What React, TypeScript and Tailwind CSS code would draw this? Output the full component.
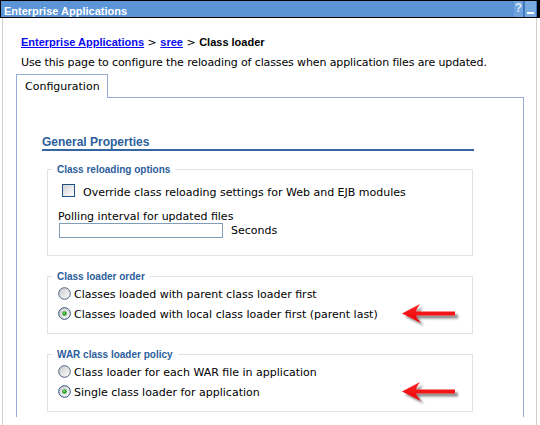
import React from "react";

const Radio = ({ checked }: { checked?: boolean }) => (
  <svg width="13" height="13" viewBox="0 0 13 13" className="shrink-0">
    <defs>
      <linearGradient id={checked ? "rg1" : "rg0"} x1="0" y1="0" x2="1" y2="1">
        <stop offset="0" stopColor="#c9c9c9" />
        <stop offset="1" stopColor="#ffffff" />
      </linearGradient>
    </defs>
    <circle cx="6.5" cy="6.5" r="5.8" fill={`url(#${checked ? "rg1" : "rg0"})`} stroke={checked ? "#2a4d78" : "#4d6280"} strokeWidth="1" />
    {checked && (
      <>
        <circle cx="6.5" cy="6.5" r="2.3" fill="#24a024" />
        <circle cx="6.1" cy="6.1" r="0.9" fill="#8fe08f" />
      </>
    )}
  </svg>
);

const Arrow = () => (
  <svg width="64" height="28" viewBox="0 0 64 28" className="absolute left-[342px] top-[-6px]">
    <defs>
      <filter id="sh" x="-20%" y="-30%" width="150%" height="180%">
        <feDropShadow dx="3" dy="3" stdDeviation="1.3" floodColor="#000" floodOpacity="0.45" />
      </filter>
      <linearGradient id="ag" x1="0" y1="0" x2="0" y2="1">
        <stop offset="0" stopColor="#ff2a2a" />
        <stop offset="1" stopColor="#e60000" />
      </linearGradient>
    </defs>
    <path
      d="M2 12.5 L20 3 Q17 7 16 10.5 L55 10.5 L55 14.5 L16 14.5 Q17 18 21 22 Z"
      fill="url(#ag)"
      filter="url(#sh)"
    />
  </svg>
);

export default function App() {
  const reg = "font-['DejaVu_Sans',sans-serif] text-[11px]";
  const bold = "font-['Liberation_Sans',Arial,sans-serif] font-bold";
  return (
    <div className={`w-[540px] h-[425px] bg-white overflow-hidden text-black ${reg}`}>
      {/* title bar */}
      <div className="h-[18px] w-[540px] border border-black border-r-[3px] bg-[#5b95d7] flex items-start">
        <div className={`${bold} text-white text-[11px] leading-[12px] pt-[4px] pl-[3px]`}>Enterprise Applications</div>
        <div className="ml-auto flex h-full">
          <div className={`${bold} w-[9px] h-full bg-[#6fa3dd] text-[#dce9f7] text-[12px] leading-[14px] text-center`}>?</div>
          <div className="w-[2px] h-full bg-[#3f78bd]" />
          <div className="w-[11px] h-full bg-[#79abe0] flex items-end justify-center pb-[3px]">
            <div className="w-[7px] h-[2px] bg-white" />
          </div>
          <div className="w-[1px] h-full bg-[#3f78bd]" />
        </div>
      </div>

      {/* content */}
      <div className="ml-[2px] w-[535px] h-[407px] border-x border-[#d0d0d0] pl-[13px] pt-[17px]">
        <div className="pl-[5px]">
          <div className="leading-[14px]">
            <a className={`${bold} text-[11px] text-[#0a0af0] underline`}>Enterprise Applications</a>
            <span> &gt; </span>
            <a className={`${bold} text-[11px] text-[#0a0af0] underline`}>sree</a>
            <span> &gt; </span>
            <span className={`${bold} text-[11px]`}>Class loader</span>
          </div>
          <div className="leading-[14px] mt-[6px] tracking-[-0.12px]">
            Use this page to configure the reloading of classes when application files are updated.
          </div>
        </div>

        {/* tab */}
        <div className="mt-[4px] w-[92px] border-t border-x border-[#95acd9] bg-white pl-[8px] pt-[5px] pb-[4px] leading-[14px] relative z-10 -mb-px">
          Configuration
        </div>

        {/* panel */}
        <div className="w-[508px] h-[320px] border-t border-x border-[#95acd9] pl-[25px] pt-[38px]">
          <div className={`${bold} text-[12px] leading-[13px] text-[#2d5e9c] w-[432px] border-b-2 border-[#3566a3]`}>
            General Properties
          </div>

          {/* fieldset 1 */}
          <fieldset className="ml-[5px] mt-[12px] w-[426px] border border-[#e2e2e2] px-[4px] pb-[17px]">
            <legend className={`${bold} text-[10px] leading-[13px] text-[#2d5e9c] px-[5px]`}>Class reloading options</legend>
            <div className="flex items-center mt-[8px] ml-[10px] h-[13px]">
              <div className="w-[13px] h-[13px] border border-[#1f4f80] bg-gradient-to-br from-[#d2d2d2] to-white shrink-0" />
              <span className="ml-[8px] leading-[13px] mt-[3px]">Override class reloading settings for Web and EJB modules</span>
            </div>
            <div className="ml-[6px] mt-[13px] leading-[13px]">Polling interval for updated files</div>
            <div className="flex items-center ml-[7px]">
              <div className="w-[164px] h-[15px] border border-[#7f9db9] bg-white" />
              <span className="ml-[8px] leading-[13px]">Seconds</span>
            </div>
          </fieldset>

          {/* fieldset 2 */}
          <fieldset className="ml-[5px] mt-[14px] w-[426px] border border-[#e2e2e2] px-[4px] pb-[13px]">
            <legend className={`${bold} text-[10px] leading-[13px] text-[#2d5e9c] px-[5px]`}>Class loader order</legend>
            <div className="flex items-center mt-[4px] ml-[6px] h-[13px]">
              <Radio />
              <span className="ml-[3px] leading-[13px] mt-[2px]">Classes loaded with parent class loader first</span>
            </div>
            <div className="relative flex items-center mt-[7px] ml-[6px] h-[13px]">
              <Radio checked />
              <span className="ml-[3px] leading-[13px] mt-[2px]">Classes loaded with local class loader first (parent last)</span>
              <Arrow />
            </div>
          </fieldset>

          {/* fieldset 3 */}
          <fieldset className="ml-[5px] mt-[14px] w-[426px] border border-[#e2e2e2] px-[4px] pb-[13px]">
            <legend className={`${bold} text-[10px] leading-[13px] text-[#2d5e9c] px-[5px]`}>WAR class loader policy</legend>
            <div className="flex items-center mt-[4px] ml-[6px] h-[13px]">
              <Radio />
              <span className="ml-[3px] leading-[13px] mt-[2px]">Class loader for each WAR file in application</span>
            </div>
            <div className="relative flex items-center mt-[7px] ml-[6px] h-[13px]">
              <Radio checked />
              <span className="ml-[3px] leading-[13px] mt-[2px]">Single class loader for application</span>
              <Arrow />
            </div>
          </fieldset>
        </div>
      </div>
    </div>
  );
}
